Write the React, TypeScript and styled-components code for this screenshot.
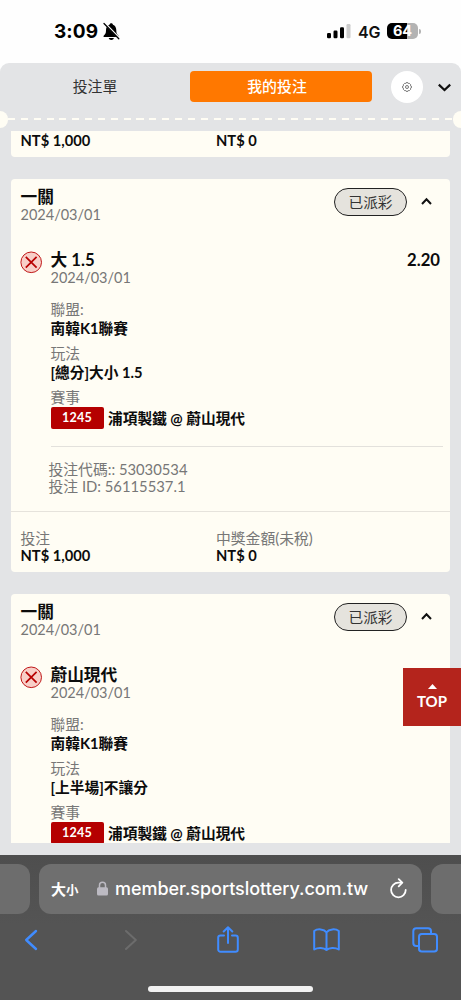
import React from 'react';
import styled, { createGlobalStyle } from 'styled-components';

const Global = createGlobalStyle`
  * { box-sizing: border-box; }
  body { margin: 0; background: #fff; }
`;

const Screen = styled.div`
  position: relative;
  width: 461px;
  height: 1000px;
  overflow: hidden;
  display: flex;
  flex-direction: column;
  background: #fefefe;
  color: #0c0c0c;
  font-family: Lato, 'Noto Sans CJK TC', sans-serif;
`;

const StatusBar = styled.header`
  height: 63px;
  flex: none;
  display: flex;
  align-items: flex-start;
  padding: 20px 40px 0 54px;
  font-family: Inter, sans-serif;
`;
const Clock = styled.span`
  font-size: 19px;
  line-height: 23px;
  font-weight: 700;
  letter-spacing: 0.1px;
  width: 48px;
  color: #000;
`;
const Spacer = styled.div`
  flex: 1;
`;
const Bell = styled.svg`
  margin-top: 2px;
  flex: none;
`;
const Signal = styled.svg`
  margin: 4px 7px 0 0;
  flex: none;
`;
const Network = styled.span`
  font-size: 16px;
  line-height: 24px;
  font-weight: 600;
  letter-spacing: -0.2px;
  width: 29px;
  color: #111;
`;
const Battery = styled.div`
  margin-top: 3px;
  width: 31px;
  height: 16px;
  border-radius: 5px;
  background: linear-gradient(90deg, #000 0 20px, #b3b3b3 20px);
  color: #fff;
  font-size: 14.5px;
  line-height: 16px;
  font-weight: 700;
  text-align: center;
`;
const BatteryTip = styled.i`
  width: 2px;
  height: 5px;
  margin: 9px 0 0 1px;
  border-radius: 0 2px 2px 0;
  background: #b3b3b3;
`;

const Panel = styled.main`
  height: 792px;
  flex: none;
  display: flex;
  flex-direction: column;
  border-radius: 9px 9px 0 0;
  background: #e3e4e6;
  overflow: hidden;
`;
const Tabs = styled.nav`
  display: flex;
  align-items: center;
  height: 47px;
  flex: none;
`;
const Tab = styled.div<{ $active?: boolean }>`
  width: ${(p) => (p.$active ? 182 : 190)}px;
  height: 31px;
  padding-right: ${(p) => (p.$active ? 8 : 0)}px;
  border-radius: 4px;
  background: ${(p) => (p.$active ? '#ff7800' : 'transparent')};
  color: ${(p) => (p.$active ? '#fff' : '#333')};
  font-size: 14.9px;
  line-height: 30px;
  font-weight: ${(p) => (p.$active ? 500 : 400)};
  text-align: center;
`;
const Settings = styled.div`
  width: 32px;
  height: 32px;
  margin: 0 15px 0 19px;
  border-radius: 50%;
  background: #fff;
  display: flex;
  align-items: center;
  justify-content: center;
`;
const Perforation = styled.div`
  height: 18px;
  flex: none;
  display: flex;
  align-items: center;
  justify-content: space-between;
`;
const Notch = styled.i<{ $right?: boolean }>`
  width: 8px;
  height: 17px;
  background: #fffdf4;
  border-radius: ${(p) => (p.$right ? '9px 0 0 9px' : '0 9px 9px 0')};
`;
const Dashes = styled.i`
  flex: 1;
  height: 2px;
  background: repeating-linear-gradient(90deg, #fffdf4 0 7px, transparent 7px 12.85px);
`;

const List = styled.section`
  margin-top: 3px;
  padding: 0 11px;
  height: 712px;
  flex: none;
  overflow: hidden;
`;
const Card = styled.article<{ $first?: boolean }>`
  background: #fffdf4;
  border-radius: ${(p) => (p.$first ? '0 0 4px 4px' : '4px')};
  margin-bottom: 21.5px;
`;
const CardHead = styled.div`
  display: flex;
  align-items: flex-start;
  height: 72px;
  padding: 9px 18px 0 9.5px;
`;
const Title = styled.div`
  font-size: 16.7px;
  line-height: 18px;
  font-weight: 700;
  white-space: nowrap;
`;
const Line = styled.div`
  font-size: 14.8px;
  line-height: 17px;
  color: #777;
  font-weight: 400;
  white-space: nowrap;
`;
const DateLine = styled(Line)`
  font-size: 14.5px;
`;
const Strong = styled.div`
  font-size: 14.7px;
  line-height: 18px;
  font-weight: 700;
  white-space: nowrap;
`;
const Status = styled.div`
  width: 73px;
  height: 28px;
  margin: 0.5px 14px 0 0;
  border: 1px solid #222;
  border-radius: 14px;
  background: #e5e3dd;
  color: #333;
  font-size: 14.7px;
  line-height: 27px;
  text-align: center;
`;
const HeadChevron = styled.svg`
  margin-top: 8px;
`;
const Leg = styled.div`
  display: flex;
  padding: 0 7px 0 10px;
`;
const LossIcon = styled.svg`
  margin: 0 7.5px 0 -1px;
  flex: none;
`;
const LegBody = styled.div`
  flex: 1;
  display: flex;
  flex-direction: column;
`;
const LegTop = styled.div`
  display: flex;
  justify-content: space-between;
  padding-right: 3px;
  height: 50px;
`;
const Odds = styled(Title)`
  padding-top: 0.5px;
`;
const Field = styled.div`
  margin-bottom: 8px;
`;
const Label = styled(Line)`
  padding-bottom: 1px;
`;
const Match = styled.div`
  display: flex;
  align-items: center;
  height: 22px;
  gap: 4.5px;
`;
const Code = styled.span`
  width: 53px;
  height: 22px;
  border-radius: 2px;
  background: #b50000;
  color: #fff;
  font-size: 12.6px;
  line-height: 22px;
  letter-spacing: 0.2px;
  font-weight: 700;
  text-align: center;
`;
const Ticket = styled.div`
  margin-top: 9px;
  padding: 14px 0 16.5px;
  border-top: 1px solid #e3e1dc;
  & > div { margin-left: -2px; }
`;
const Totals = styled.div<{ $cut?: boolean }>`
  display: grid;
  grid-template-columns: 195.5px 1fr;
  padding: ${(p) => (p.$cut ? '0.5px 9.5px 8.5px' : '18px 9.5px 8px')};
  border-top: ${(p) => (p.$cut ? '0' : '1px solid #e6e3dc')};
`;
const Amount = styled(Strong)`
  line-height: 17px;
`;

const TopButton = styled.button`
  position: absolute;
  right: 0;
  top: 668.3px;
  width: 58px;
  height: 57.7px;
  border: 0;
  padding: 16px 0 0;
  background: #b4241c;
  color: #fff;
  display: flex;
  flex-direction: column;
  align-items: center;
  font: 700 15px/18px Lato, sans-serif;
`;
const TopLabel = styled.span`
  margin-top: 3px;
`;

const Browser = styled.footer`
  flex: 1;
  background: linear-gradient(#4e4e4e, #545454 70px);
  display: flex;
  flex-direction: column;
`;
const AddressRow = styled.div`
  display: flex;
  justify-content: space-between;
  padding-top: 8.5px;
`;
const SideTab = styled.div<{ $right?: boolean }>`
  width: 30px;
  height: 50px;
  background: #6d6d6d;
  border-radius: ${(p) => (p.$right ? '12px 0 0 12px' : '0 12px 12px 0')};
`;
const Address = styled.div`
  width: 383px;
  height: 50px;
  border-radius: 12px;
  background: #6f6f6f;
  color: #fff;
  display: flex;
  align-items: center;
  padding: 0 15px 0 12px;
  font-family: Inter, 'Noto Sans CJK TC', sans-serif;
`;
const TextSize = styled.span`
  width: 46px;
  font-size: 15px;
  font-weight: 700;
  white-space: nowrap;
  small { font-size: 12.5px; }
`;
const Url = styled.span`
  margin-left: 7px;
  width: 254px;
  font-size: 18px;
  font-weight: 500;
  letter-spacing: -0.03px;
  white-space: nowrap;
`;
const Tools = styled.div`
  display: grid;
  grid-template-columns: repeat(5, 98.4px);
  justify-items: center;
  align-items: center;
  margin-left: -18px;
  padding-top: 12px;
  height: 41px;
`;
const HomeBar = styled.i`
  width: 165px;
  height: 5.5px;
  margin: 31.5px auto 0;
  border-radius: 3px;
  background: #f2f2f2;
`;

interface Bet {
  pick: string;
  odds: string;
  market: string;
  ticket?: { code: string; id: string };
}

const bets: Bet[] = [
  {
    pick: '大 1.5',
    odds: '2.20',
    market: '[總分]大小 1.5',
    ticket: { code: '53030534', id: '56115537.1' },
  },
  { pick: '蔚山現代', odds: '2.47', market: '[上半場]不讓分' },
];

const BetCard = ({ pick, odds, market, ticket }: Bet) => (
  <Card>
    <CardHead>
      <div>
        <Title>一關</Title>
        <DateLine>2024/03/01</DateLine>
      </div>
      <Spacer />
      <Status>已派彩</Status>
      <HeadChevron width="11" height="12" viewBox="0 0 11 12" fill="none" stroke="#111" strokeWidth="2">
        <path d="M1 8 5.5 3.2 10 8" />
      </HeadChevron>
    </CardHead>
    <Leg>
      <LossIcon width="23" height="23" viewBox="0 0 23 23">
        <circle cx="11.2" cy="11.3" r="10.3" fill="#f8cfc8" stroke="#c01818" />
        <path d="M5.8 5.9l10.8 10.8M16.6 5.9L5.8 16.7" stroke="#b80000" strokeWidth="1.7" fill="none" />
      </LossIcon>
      <LegBody>
        <LegTop>
          <div>
            <Title>{pick}</Title>
            <DateLine>2024/03/01</DateLine>
          </div>
          <Odds>{odds}</Odds>
        </LegTop>
        <Field>
          <Label>聯盟:</Label>
          <Strong>南韓K1聯賽</Strong>
        </Field>
        <Field>
          <Label>玩法</Label>
          <Strong>{market}</Strong>
        </Field>
        <Field>
          <Label>賽事</Label>
          <Match>
            <Code>1245</Code>
            <Strong>浦項製鐵 @ 蔚山現代</Strong>
          </Match>
        </Field>
        {ticket && (
          <Ticket>
            <Line>投注代碼:: {ticket.code}</Line>
            <Line>投注 ID: {ticket.id}</Line>
          </Ticket>
        )}
      </LegBody>
    </Leg>
    {ticket && (
      <Totals>
        <Line>投注</Line>
        <Line>中獎金額(未稅)</Line>
        <Amount>NT$ 1,000</Amount>
        <Amount>NT$ 0</Amount>
      </Totals>
    )}
  </Card>
);

export default function App() {
  return (
    <Screen>
      <Global />
      <StatusBar>
        <Clock>3:09</Clock>
        <Bell width="19" height="19" viewBox="0 0 19 19">
          <path d="M9.3 1.2c-1 0-1.7.6-1.8 1.5C5 3.6 4 5.6 4 8.2c0 3-.7 4-2.1 5.2-.8.8-.3 1.7.6 1.7h13.2c1 0 1.4-.9.6-1.7-1.4-1.2-2-2.2-2-5.2 0-2.6-1.2-4.6-3.3-5.5-.1-.9-.8-1.5-1.7-1.5z" fill="#000" />
          <path d="M6.7 16h5.2c-.3 1.3-1.300 2-2.600 2s-2.300-.7-2.600-2z" fill="#000" />
          <path d="M3.2 1.8 17.500 16.500" stroke="#fefefe" strokeWidth="2.2" />
          <path d="M2 1.5 16.8 16.8" stroke="#000" strokeWidth="1.3" strokeLinecap="round" />
        </Bell>
        <Spacer />
        <Signal width="24" height="15" viewBox="0 0 24 15">
          <rect x="0" y="9" width="4" height="5.3" rx="1.2" />
          <rect x="6.5" y="6.5" width="4" height="7.8" rx="1.2" />
          <rect x="13" y="3.3" width="4" height="11" rx="1.2" />
          <rect x="19.5" y="0" width="4" height="14.3" rx="1.2" fill="#ccc" />
        </Signal>
        <Network>4G</Network>
        <Battery>64</Battery>
        <BatteryTip />
      </StatusBar>

      <Panel>
        <Tabs>
          <Tab>投注單</Tab>
          <Tab $active>我的投注</Tab>
          <Settings>
            <svg width="10" height="10" viewBox="0 0 10 10" fill="none" stroke="#555" strokeWidth=".8">
              <path d="M4 .7h2l.4.8 1-.1 1.2 1.2-.1 1 .8.4v2l-.8.4.1 1-1.2 1.2-1-.1-.4.8H4l-.4-.8-1 .1-1.2-1.2.1-1-.8-.4V4l.8-.4-.1-1 1.2-1.2 1 .1z" />
              <circle cx="5" cy="5" r="1.5" />
            </svg>
          </Settings>
          <svg width="13" height="10" viewBox="0 0 13 10" fill="none" stroke="#111" strokeWidth="2.2">
            <path d="M.8 2.6 6.5 8l5.7-5.4" />
          </svg>
        </Tabs>
        <Perforation>
          <Notch />
          <Dashes />
          <Notch $right />
        </Perforation>
        <List>
          <Card $first>
            <Totals $cut>
              <Amount>NT$ 1,000</Amount>
              <Amount>NT$ 0</Amount>
            </Totals>
          </Card>
          {bets.map((bet) => (
            <BetCard key={bet.pick} {...bet} />
          ))}
        </List>
      </Panel>

      <TopButton>
        <svg width="9" height="5" viewBox="0 0 9 5">
          <path d="M4.5 0 9 5H0z" fill="#fff" />
        </svg>
        <TopLabel>TOP</TopLabel>
      </TopButton>

      <Browser>
        <AddressRow>
          <SideTab />
          <Address>
            <TextSize>
              大<small>小</small>
            </TextSize>
            <svg width="11" height="15" viewBox="0 0 11 15">
              <path d="M2.5 7V4.2a3 3 0 0 1 6 0V7" fill="none" stroke="#bcbac2" strokeWidth="1.5" />
              <rect x="0" y="6.3" width="11" height="8.2" rx="1.5" fill="#bcbac2" />
            </svg>
            <Url>member.sportslottery.com.tw</Url>
            <Spacer />
            <svg width="17" height="22" viewBox="0 0 17 22" fill="none" stroke="#fff" strokeWidth="1.8" strokeLinecap="round" strokeLinejoin="round">
              <path d="M11.5 4.7H8.4A7.3 7.3 0 1 0 15.7 12" />
              <path d="M8.7 1.1 12.3 4.7 8.7 8.3" />
            </svg>
          </Address>
          <SideTab $right />
        </AddressRow>
        <Tools>
          <svg width="14" height="22" viewBox="0 0 14 22" fill="none" stroke="#408cff" strokeWidth="2.4" strokeLinecap="round" strokeLinejoin="round">
            <path d="M12 2 2.2 11 12 20" />
          </svg>
          <svg width="14" height="22" viewBox="-1 0 14 22" fill="none" stroke="#6c6c6c" strokeWidth="2" strokeLinecap="round" strokeLinejoin="round">
            <path d="M2 2 11.8 11 2 20" />
          </svg>
          <svg width="24" height="28" viewBox="-1 0 24 28" fill="none" stroke="#408cff" strokeWidth="2" strokeLinecap="round" strokeLinejoin="round">
            <path d="M7 9.5H3.5a2.3 2.3 0 0 0-2.3 2.3V23.5a2.3 2.3 0 0 0 2.3 2.3h15a2.3 2.3 0 0 0 2.3-2.3V11.8a2.3 2.3 0 0 0-2.3-2.3H15M11 17V1.5M6.7 5.5 11 1.3l4.3 4.2" />
          </svg>
          <svg width="27" height="24" viewBox="0 0 27 24" fill="none" stroke="#408cff" strokeWidth="2" strokeLinecap="round" strokeLinejoin="round">
            <path d="M13.5 4.5C11 .8 4.5.5 1.2 3v18.500c3.500-2.200 9.800-2 12.300.5 2.500-2.500 8.800-2.700 12.300-.5V3C22.500.5 16 .8 13.500 4.500zV22" />
          </svg>
          <svg width="26" height="26" viewBox="0 0 26 26" fill="none" stroke="#408cff" strokeWidth="2" strokeLinejoin="round">
            <rect x="7" y="7" width="18" height="17.5" rx="2.8" />
            <path d="M7 19H4.3A3 3 0 0 1 1.3 16V4.2a3 3 0 0 1 3-3H16a3 3 0 0 1 3 3V7" />
          </svg>
        </Tools>
        <HomeBar />
      </Browser>
    </Screen>
  );
}
